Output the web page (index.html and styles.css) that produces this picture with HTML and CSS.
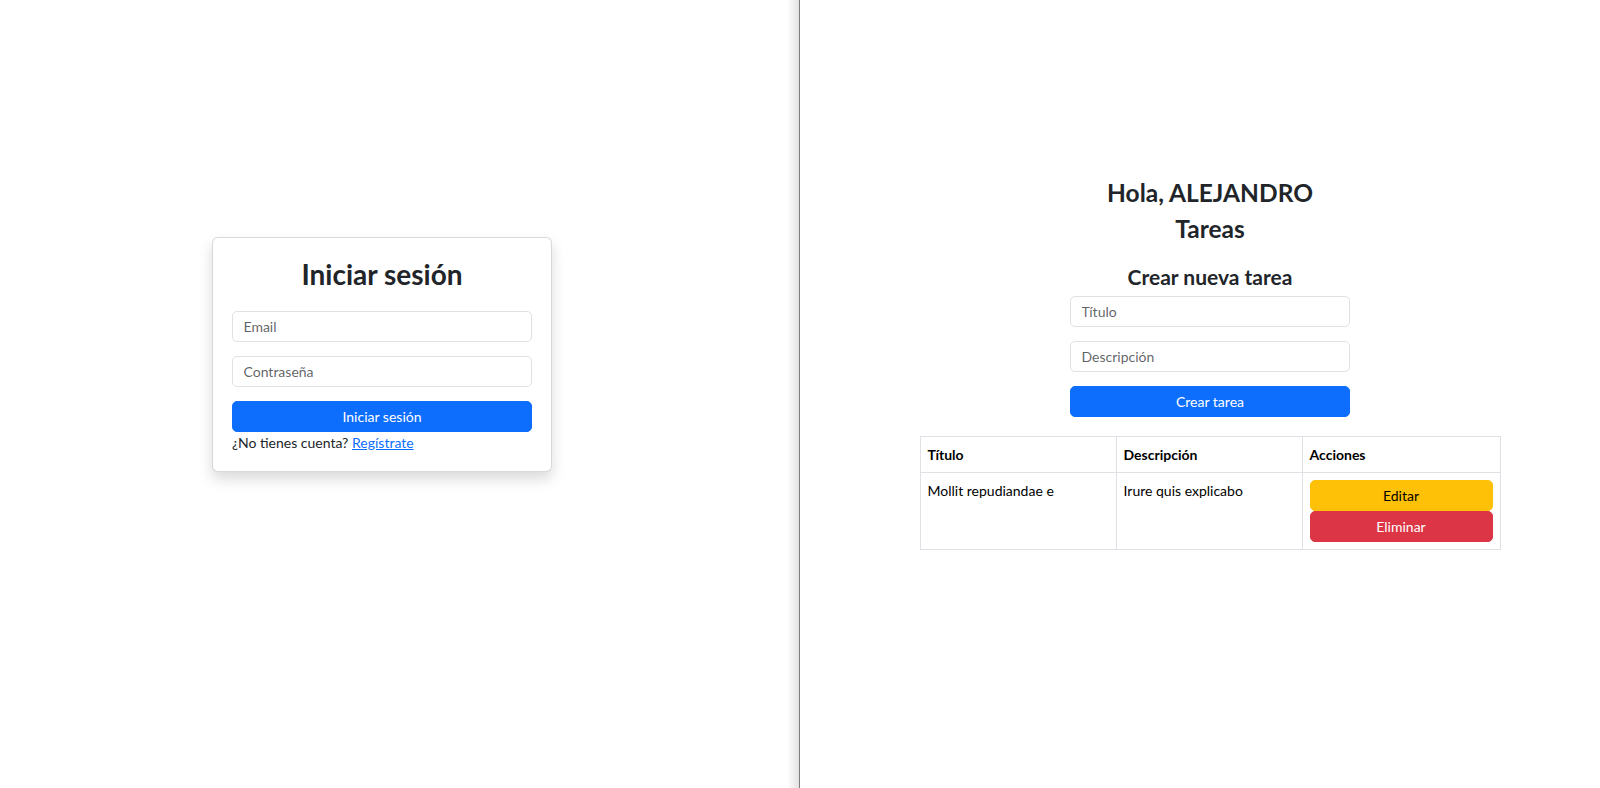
FILE: index.html
```html
<!DOCTYPE html>
<html lang="es">
<head>
<meta charset="utf-8">
<title>Tareas</title>
<link rel="stylesheet" href="styles.css">
</head>
<body>
<div class="screen">
  <section class="pane pane-left">
    <div class="login-card">
      <h2 class="login-title">Iniciar sesión</h2>
      <input class="field" type="email" placeholder="Email">
      <input class="field" type="password" placeholder="Contraseña">
      <button class="btn btn-primary" type="button">Iniciar sesión</button>
      <p class="login-note">¿No tienes cuenta? <a href="#" class="link">Regístrate</a></p>
    </div>
  </section>
  <div class="divider"></div>
  <section class="pane pane-right">
    <h3 class="title">Hola, ALEJANDRO</h3>
    <h3 class="title">Tareas</h3>
    <h4 class="subtitle">Crear nueva tarea</h4>
    <form class="task-form">
      <input class="field" type="text" placeholder="Título">
      <input class="field" type="text" placeholder="Descripción">
      <button class="btn btn-primary" type="button">Crear tarea</button>
    </form>
    <table class="tasks">
      <thead>
        <tr>
          <th class="col-title">Título</th>
          <th class="col-desc">Descripción</th>
          <th class="col-actions">Acciones</th>
        </tr>
      </thead>
      <tbody>
        <tr>
          <td>Mollit repudiandae e</td>
          <td>Irure quis explicabo</td>
          <td>
            <button class="btn btn-warning" type="button">Editar</button>
            <button class="btn btn-danger" type="button">Eliminar</button>
          </td>
        </tr>
      </tbody>
    </table>
  </section>
</div>
</body>
</html>
```
FILE: styles.css
```css
* { box-sizing: border-box; }
html, body { margin: 0; padding: 0; background: #fff; }
body {
  font-family: Lato, "Noto Sans", sans-serif;
  font-size: 14px;
  line-height: 21px;
  color: #212529;
  height: 788px;
  overflow: hidden;
}
.screen { display: flex; height: 788px; }
.pane-left {
  width: 764px;
  flex: 0 0 764px;
  display: flex;
  justify-content: center;
  align-items: flex-start;
  padding-top: 237px;
}
.divider {
  flex: 0 0 36px;
  width: 36px;
  height: 788px;
  border-right: 1px solid #7d7d7d;
  background: linear-gradient(to right, #ffffff 0, #ffffff 23px, #f1f1f1 29px, #e2e2e2 35px);
}
.pane-right {
  flex: 0 0 800px;
  width: 800px;
  padding-left: 20px;
  padding-top: 178px;
  display: flex;
  flex-direction: column;
  align-items: center;
}

.login-card {
  width: 340px;
  border: 1px solid rgba(0,0,0,.15);
  border-radius: 6px;
  padding: 20px 19px 18px;
  box-shadow: 0 7px 14px rgba(0,0,0,.15);
  background: #fff;
  display: flex;
  flex-direction: column;
}
.login-title {
  margin: 0 0 19px;
  font-size: 28px;
  line-height: 33.6px;
  font-weight: 700;
  text-align: center;
}
.field {
  display: block;
  width: 100%;
  height: 31px;
  margin: 0 0 14px;
  padding: 4px 10.5px;
  font-family: Lato, "Noto Sans", sans-serif;
  font-size: 14px;
  line-height: 21px;
  color: #212529;
  background: #fff;
  border: 1px solid #dee2e6;
  border-radius: 5px;
  outline: none;
}
.field::placeholder { color: rgba(33,37,41,.72); }
.btn {
  display: block;
  width: 100%;
  height: 31px;
  padding: 4px 10px;
  font-family: Lato, "Noto Sans", sans-serif;
  font-size: 14px;
  line-height: 21px;
  border: 1px solid transparent;
  border-radius: 5px;
  text-align: center;
  cursor: pointer;
}
.btn-primary { background: #0d6efd; border-color: #0d6efd; color: #fff; }
.btn-warning { background: #ffc107; border-color: #ffc107; color: #000; }
.btn-danger { background: #dc3545; border-color: #dc3545; color: #fff; }
.login-note { margin: 0; }
.link { color: #0d6efd; text-decoration: underline; }

.title {
  margin: 0 0 7px;
  font-size: 24.5px;
  line-height: 29.4px;
  font-weight: 700;
  text-align: center;
}
.subtitle {
  margin: 13px 0 7px;
  font-size: 21px;
  line-height: 25.2px;
  font-weight: 700;
  text-align: center;
}
.task-form { width: 280px; margin: 0 0 19px; }

.tasks {
  width: 580px;
  border-collapse: collapse;
  color: #000;
  table-layout: fixed;
}
.tasks th, .tasks td {
  border: 1px solid #dee2e6;
  padding: 7px;
  text-align: left;
  vertical-align: top;
}
.tasks th { font-weight: 700; }
.col-title { width: 196px; }
.col-desc { width: 186px; }
.col-actions { width: 198px; }
```
